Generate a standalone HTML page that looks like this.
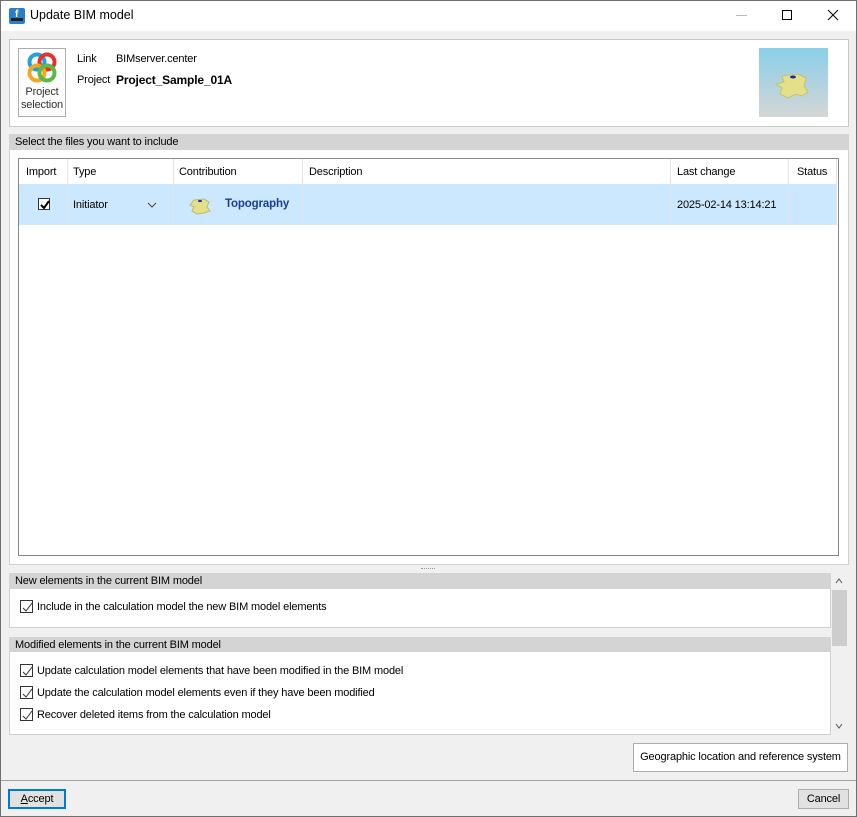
<!DOCTYPE html>
<html><head><style>
*{margin:0;padding:0;box-sizing:border-box}
body{width:857px;height:817px;position:relative;background:#f0f0f0;font-family:"Liberation Sans",sans-serif;font-size:11px;letter-spacing:-0.15px;color:#000;overflow:hidden}
.a{position:absolute}
.win{left:0;top:0;width:857px;height:817px;border:1px solid #707070}
.hdr{background:#d4d4d4;height:16px;line-height:16px;padding-left:6px}
.cb{position:absolute;width:13px;height:13px;border:1px solid #333;background:#fff}
.cb svg{position:absolute;left:1px;top:1px}
.col{position:absolute;top:159px;height:66px;border-left:1px solid #e5e5e5}
</style></head><body>
<div class="a win"></div>
<div class="a" style="left:1px;top:1px;width:855px;height:30px;background:#fff"></div>
<div class="a" style="left:9px;top:8px;width:16px;height:16px;background:#2a7fc9;border-radius:2px"><div class="a" style="left:2px;top:10px;width:12px;height:3px;background:#222"></div><div class="a" style="left:6px;top:2px;color:#fff;font-size:10px;line-height:10px;font-weight:bold">f</div></div>
<div class="a" style="left:30px;top:8px;font-size:12.5px;letter-spacing:0">Update BIM model</div>
<div class="a" style="left:736px;top:15px;width:11px;height:1px;background:#bbb"></div>
<div class="a" style="left:782px;top:10px;width:10px;height:10px;border:1px solid #000"></div>
<svg class="a" style="left:827px;top:9px" width="12" height="12"><path d="M1 1L11 11M11 1L1 11" stroke="#000" stroke-width="1"/></svg>

<div class="a" style="left:9px;top:39px;width:840px;height:88px;background:#fff;border:1px solid #c8c8c8"></div>
<div class="a" style="left:18px;top:48px;width:48px;height:69px;border:1px solid #adadad;background:#fdfdfd"></div>
<svg class="a" style="left:25px;top:51px" width="34" height="34" viewBox="0 0 34 34">
<circle cx="12" cy="11" r="7.5" fill="none" stroke="#1fa3d9" stroke-width="4"/>
<circle cx="22" cy="11" r="7.5" fill="none" stroke="#e2342d" stroke-width="4"/>
<circle cx="12" cy="22" r="7.5" fill="none" stroke="#f5a623" stroke-width="4"/>
<circle cx="22" cy="22" r="7.5" fill="none" stroke="#5fb84a" stroke-width="4"/>
</svg>
<div class="a" style="left:18px;top:86px;width:48px;text-align:center;line-height:13px;color:#333">Project<br>selection</div>
<div class="a" style="left:77px;top:53px">Link</div>
<div class="a" style="left:116px;top:53px">BIMserver.center</div>
<div class="a" style="left:77px;top:74px">Project</div>
<div class="a" style="left:116px;top:73px;font-weight:bold;font-size:12px">Project_Sample_01A</div>
<div class="a" style="left:759px;top:48px;width:69px;height:69px;background:linear-gradient(#8acfe9,#d4d6d6)"></div>
<svg class="a" style="left:774px;top:70px" width="36" height="32"><path d="M8 6L24 4L32 8L30 16L34 22L28 26L22 24L14 28L6 24L8 18L2 14L10 12Z" fill="#e4e08a" stroke="#c8c070"/><ellipse cx="19" cy="7" rx="3" ry="1.5" fill="#1a2a9a"/></svg>

<div class="a hdr" style="left:9px;top:134px;width:840px">Select the files you want to include</div>
<div class="a" style="left:9px;top:150px;width:840px;height:415px;background:#fff;border:1px solid #d0d0d0;border-top:none"></div>
<div class="a" style="left:18px;top:158px;width:821px;height:398px;border:1px solid #828790;background:#fff"></div>
<div class="a" style="left:19px;top:184px;width:817px;height:41px;background:#cce8ff"></div>
<div class="col" style="left:67px"></div><div class="col" style="left:173px"></div><div class="col" style="left:302px"></div><div class="col" style="left:670px"></div><div class="col" style="left:788px"></div><div class="col" style="left:836px"></div>
<div class="a" style="left:26px;top:166px">Import</div>
<div class="a" style="left:73px;top:166px">Type</div>
<div class="a" style="left:179px;top:166px">Contribution</div>
<div class="a" style="left:309px;top:166px">Description</div>
<div class="a" style="left:677px;top:166px">Last change</div>
<div class="a" style="left:797px;top:166px">Status</div>
<div class="cb" style="left:38px;top:198px;width:12px;height:12px"><svg width="10" height="10"><path d="M1 5L4 8L9 1" stroke="#000" stroke-width="2" fill="none"/></svg></div>
<div class="a" style="left:73px;top:199px">Initiator</div>
<svg class="a" style="left:147px;top:202px" width="10" height="6"><path d="M1 1L5 5L9 1" stroke="#444" fill="none"/></svg>
<svg class="a" style="left:189px;top:197px" width="22" height="18"><path d="M5 3L15 2L20 5L18 10L21 14L15 16L8 17L3 14L5 10L1 8Z" fill="#e4e08a" stroke="#c0b870"/><ellipse cx="11" cy="4" rx="2" ry="1" fill="#1a2a9a"/></svg>
<div class="a" style="left:225px;top:198px;font-weight:bold;color:#1c3e94;font-size:11.5px">Topography</div>
<div class="a" style="left:677px;top:199px">2025-02-14 13:14:21</div>

<div class="a" style="left:421px;top:568px;width:14px;height:1px;border-top:1px dotted #999"></div>

<div class="a hdr" style="left:9px;top:573px;width:822px">New elements in the current BIM model</div>
<div class="a" style="left:9px;top:589px;width:822px;height:39px;background:#fff;border:1px solid #d0d0d0;border-top:none"></div>
<div class="cb" style="left:20px;top:600px"><svg width="11" height="11"><path d="M1 6L4 9L10 1" stroke="#333" stroke-width="1" fill="none"/></svg></div>
<div class="a" style="left:37px;top:601px">Include in the calculation model the new BIM model elements</div>

<div class="a hdr" style="left:9px;top:637px;width:822px">Modified elements in the current BIM model</div>
<div class="a" style="left:9px;top:652px;width:822px;height:83px;background:#fff;border:1px solid #d0d0d0;border-top:none"></div>
<div class="cb" style="left:20px;top:664px"><svg width="11" height="11"><path d="M1 6L4 9L10 1" stroke="#333" fill="none"/></svg></div>
<div class="a" style="left:37px;top:665px">Update calculation model elements that have been modified in the BIM model</div>
<div class="cb" style="left:20px;top:686px"><svg width="11" height="11"><path d="M1 6L4 9L10 1" stroke="#333" fill="none"/></svg></div>
<div class="a" style="left:37px;top:687px">Update the calculation model elements even if they have been modified</div>
<div class="cb" style="left:20px;top:708px"><svg width="11" height="11"><path d="M1 6L4 9L10 1" stroke="#333" fill="none"/></svg></div>
<div class="a" style="left:37px;top:709px">Recover deleted items from the calculation model</div>

<div class="a" style="left:831px;top:573px;width:17px;height:162px;background:#f0f0f0"></div>
<div class="a" style="left:832px;top:590px;width:15px;height:56px;background:#cdcdcd"></div>
<svg class="a" style="left:835px;top:578px" width="8" height="6"><path d="M1 5L4 1L7 5" stroke="#555" fill="none"/></svg>
<svg class="a" style="left:835px;top:723px" width="8" height="6"><path d="M1 1L4 5L7 1" stroke="#555" fill="none"/></svg>

<div class="a" style="left:633px;top:743px;width:215px;height:29px;border:1px solid #adadad;background:#fff;text-align:center;line-height:27px;white-space:nowrap">Geographic location and reference system</div>

<div class="a" style="left:1px;top:780px;width:855px;height:1px;background:#a0a0a0"></div>
<div class="a" style="left:1px;top:781px;width:855px;height:35px;background:#f0f0f0"></div>
<div class="a" style="left:8px;top:789px;width:58px;height:20px;border:2px solid #0078d7;background:#e1e1e1;text-align:center;line-height:16px"><u>A</u>ccept</div>
<div class="a" style="left:798px;top:789px;width:51px;height:20px;border:1px solid #adadad;background:#e1e1e1;text-align:center;line-height:18px">Cancel</div>
</body></html>
